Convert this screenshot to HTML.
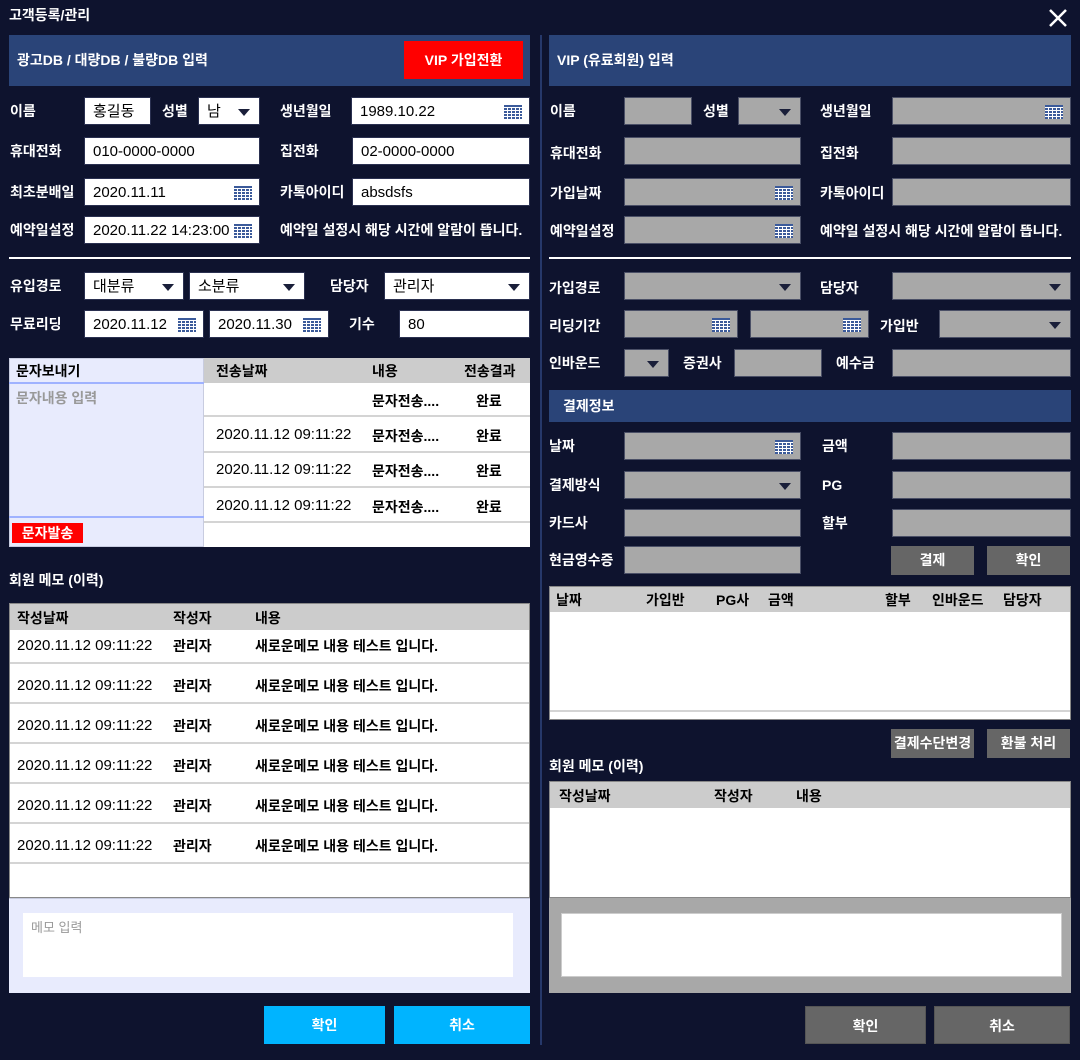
<!DOCTYPE html>
<html><head><meta charset="utf-8"><style>
*{margin:0;padding:0;box-sizing:border-box}
body{width:1080px;height:1060px;background:#0e132e;position:relative;overflow:hidden;font-family:"Liberation Sans","Noto Sans CJK KR",sans-serif;font-size:14px;color:#fff;font-weight:bold}
.a{position:absolute}
.l{position:absolute;line-height:28px;white-space:nowrap}
.i{position:absolute;height:28px;background:#fff;color:#000;line-height:28px;padding-left:8px;font-size:15px;font-weight:normal;border:1px solid #2a3050;white-space:nowrap}
.g{position:absolute;height:28px;background:#a8a8a8;border:1px solid #4a4f66}
.bar{position:absolute;background:#2a4478;line-height:51px;padding-left:8px;font-size:14px}
.cal{position:absolute;right:7px;top:7px;width:18px;height:14px;background:
repeating-linear-gradient(90deg,transparent 0 3px,#fff 3px 4px),repeating-linear-gradient(0deg,#3b5a9a 0 2px,#fff 2px 3px);border-top:2px solid #3b5a9a}
.arr{position:absolute;right:9px;top:11px;width:0;height:0;border-left:6px solid transparent;border-right:6px solid transparent;border-top:7px solid #1a1f3a}
.line{position:absolute;height:2px;background:#fff}
.btn{position:absolute;text-align:center;color:#fff;font-size:14px}
.th{position:absolute;background:#cccccc;color:#000}
.cell{position:absolute;color:#000;white-space:nowrap}
.d{font-weight:normal;font-size:15px;top:auto}
.row{position:absolute;background:#fff;border-bottom:2px solid #d4d4d4}
</style></head><body>
<div class="a" style="left:9px;top:5px;font-size:14px">고객등록/관리</div>
<svg class="a" style="left:1048px;top:8px" width="20" height="20"><path d="M2 2L18 18M18 2L2 18" stroke="#fff" stroke-width="2.5"/></svg>
<div class="a" style="left:540px;top:35px;width:2px;height:1010px;background:#26386a"></div>

<div class="bar" style="left:9px;top:35px;width:521px;height:51px">광고DB / 대량DB / 불량DB 입력</div>
<div class="btn" style="left:404px;top:41px;width:119px;height:38px;line-height:38px;background:#ff0000">VIP 가입전환</div>

<div class="l" style="left:10px;top:97px">이름</div>
<div class="i" style="left:84px;top:97px;width:67px">홍길동</div>
<div class="l" style="left:162px;top:97px">성별</div>
<div class="i" style="left:198px;top:97px;width:62px">남<span class="arr"></span></div>
<div class="l" style="left:280px;top:97px">생년월일</div>
<div class="i" style="left:351px;top:97px;width:179px">1989.10.22<span class="cal"></span></div>

<div class="l" style="left:10px;top:137px">휴대전화</div>
<div class="i" style="left:84px;top:137px;width:176px">010-0000-0000</div>
<div class="l" style="left:280px;top:137px">집전화</div>
<div class="i" style="left:352px;top:137px;width:178px">02-0000-0000</div>

<div class="l" style="left:10px;top:178px">최초분배일</div>
<div class="i" style="left:84px;top:178px;width:176px">2020.11.11<span class="cal"></span></div>
<div class="l" style="left:280px;top:178px">카톡아이디</div>
<div class="i" style="left:352px;top:178px;width:178px">absdsfs</div>

<div class="l" style="left:10px;top:216px">예약일설정</div>
<div class="i" style="left:84px;top:216px;width:176px">2020.11.22 14:23:00<span class="cal"></span></div>
<div class="l" style="left:280px;top:216px">예약일 설정시 해당 시간에 알람이 뜹니다.</div>

<div class="line" style="left:9px;top:257px;width:521px"></div>

<div class="l" style="left:10px;top:272px">유입경로</div>
<div class="i" style="left:84px;top:272px;width:100px">대분류<span class="arr"></span></div>
<div class="i" style="left:189px;top:272px;width:116px">소분류<span class="arr"></span></div>
<div class="l" style="left:330px;top:272px">담당자</div>
<div class="i" style="left:384px;top:272px;width:146px">관리자<span class="arr"></span></div>

<div class="l" style="left:10px;top:310px">무료리딩</div>
<div class="i" style="left:84px;top:310px;width:120px">2020.11.12<span class="cal"></span></div>
<div class="i" style="left:209px;top:310px;width:120px">2020.11.30<span class="cal"></span></div>
<div class="l" style="left:349px;top:310px">기수</div>
<div class="i" style="left:399px;top:310px;width:131px">80</div>

<div class="a" style="left:9px;top:358px;width:195px;height:189px;background:#e8ebfd;border:1px solid #c8cce0"></div>
<div class="cell" style="left:16px;top:360px;line-height:22px">문자보내기</div>
<div class="a" style="left:9px;top:382px;width:195px;height:2px;background:#9fb2ff"></div>
<div class="cell" style="left:16px;top:388px;color:#999;line-height:20px">문자내용 입력</div>
<div class="a" style="left:9px;top:516px;width:195px;height:2px;background:#9fb2ff"></div>
<div class="btn" style="left:12px;top:523px;width:71px;height:20px;line-height:20px;background:#ff0000">문자발송</div>
<div class="a" style="left:204px;top:358px;width:326px;height:189px;background:#fff"></div>
<div class="th" style="left:204px;top:358px;width:326px;height:25px"></div>
<div class="cell" style="left:216px;top:361px">전송날짜</div>
<div class="cell" style="left:372px;top:361px">내용</div>
<div class="cell" style="left:464px;top:361px">전송결과</div>
<div class="row" style="left:204px;top:383px;width:326px;height:34px"></div>
<div class="row" style="left:204px;top:417px;width:326px;height:36px"></div>
<div class="row" style="left:204px;top:453px;width:326px;height:35px"></div>
<div class="row" style="left:204px;top:488px;width:326px;height:35px"></div>
<div class="cell" style="left:372px;top:391px">문자전송....</div><div class="cell" style="left:476px;top:391px">완료</div>
<div class="cell" style="left:216px;top:426px;font-weight:normal;font-size:15px">2020.11.12 09:11:22</div><div class="cell" style="left:372px;top:426px">문자전송....</div><div class="cell" style="left:476px;top:426px">완료</div>
<div class="cell" style="left:216px;top:461px;font-weight:normal;font-size:15px">2020.11.12 09:11:22</div><div class="cell" style="left:372px;top:461px">문자전송....</div><div class="cell" style="left:476px;top:461px">완료</div>
<div class="cell" style="left:216px;top:497px;font-weight:normal;font-size:15px">2020.11.12 09:11:22</div><div class="cell" style="left:372px;top:497px">문자전송....</div><div class="cell" style="left:476px;top:497px">완료</div>

<div class="l" style="left:9px;top:566px">회원 메모 (이력)</div>

<div class="a" style="left:9px;top:603px;width:521px;height:295px;background:#fff;border:1px solid #888"></div>
<div class="th" style="left:10px;top:604px;width:519px;height:26px"></div>
<div class="cell" style="left:17px;top:608px">작성날짜</div>
<div class="cell" style="left:173px;top:608px">작성자</div>
<div class="cell" style="left:255px;top:608px">내용</div>
<div class="row" style="left:10px;top:630px;width:519px;height:34px"></div>
<div class="row" style="left:10px;top:664px;width:519px;height:40px"></div>
<div class="row" style="left:10px;top:704px;width:519px;height:40px"></div>
<div class="row" style="left:10px;top:744px;width:519px;height:40px"></div>
<div class="row" style="left:10px;top:784px;width:519px;height:40px"></div>
<div class="row" style="left:10px;top:824px;width:519px;height:40px"></div>
<div class="cell" style="left:17px;top:637px;font-weight:normal;font-size:15px">2020.11.12 09:11:22</div><div class="cell" style="left:173px;top:636px">관리자</div><div class="cell" style="left:255px;top:636px">새로운메모 내용 테스트 입니다.</div>
<div class="cell" style="left:17px;top:677px;font-weight:normal;font-size:15px">2020.11.12 09:11:22</div><div class="cell" style="left:173px;top:676px">관리자</div><div class="cell" style="left:255px;top:676px">새로운메모 내용 테스트 입니다.</div>
<div class="cell" style="left:17px;top:717px;font-weight:normal;font-size:15px">2020.11.12 09:11:22</div><div class="cell" style="left:173px;top:716px">관리자</div><div class="cell" style="left:255px;top:716px">새로운메모 내용 테스트 입니다.</div>
<div class="cell" style="left:17px;top:757px;font-weight:normal;font-size:15px">2020.11.12 09:11:22</div><div class="cell" style="left:173px;top:756px">관리자</div><div class="cell" style="left:255px;top:756px">새로운메모 내용 테스트 입니다.</div>
<div class="cell" style="left:17px;top:797px;font-weight:normal;font-size:15px">2020.11.12 09:11:22</div><div class="cell" style="left:173px;top:796px">관리자</div><div class="cell" style="left:255px;top:796px">새로운메모 내용 테스트 입니다.</div>
<div class="cell" style="left:17px;top:837px;font-weight:normal;font-size:15px">2020.11.12 09:11:22</div><div class="cell" style="left:173px;top:836px">관리자</div><div class="cell" style="left:255px;top:836px">새로운메모 내용 테스트 입니다.</div>
<div class="a" style="left:9px;top:898px;width:521px;height:95px;background:#e8ebfd;border-top:1px solid #c8cce0"></div>
<div class="a" style="left:23px;top:913px;width:490px;height:64px;background:#fff;color:#999;font-weight:normal;padding:4px 8px;font-size:13px">메모 입력</div>
<div class="btn" style="left:264px;top:1006px;width:121px;height:38px;line-height:38px;background:#00b4ff">확인</div>
<div class="btn" style="left:394px;top:1006px;width:136px;height:38px;line-height:38px;background:#00b4ff">취소</div>

<div class="bar" style="left:549px;top:35px;width:522px;height:51px">VIP (유료회원) 입력</div>

<div class="l" style="left:550px;top:97px">이름</div>
<div class="g" style="left:624px;top:97px;width:68px"></div>
<div class="l" style="left:703px;top:97px">성별</div>
<div class="g" style="left:738px;top:97px;width:63px"><span class="arr"></span></div>
<div class="l" style="left:820px;top:97px">생년월일</div>
<div class="g" style="left:892px;top:97px;width:179px"><span class="cal"></span></div>

<div class="l" style="left:550px;top:139px">휴대전화</div>
<div class="g" style="left:624px;top:137px;width:177px"></div>
<div class="l" style="left:820px;top:139px">집전화</div>
<div class="g" style="left:892px;top:137px;width:179px"></div>

<div class="l" style="left:550px;top:179px">가입날짜</div>
<div class="g" style="left:624px;top:178px;width:177px"><span class="cal"></span></div>
<div class="l" style="left:820px;top:179px">카톡아이디</div>
<div class="g" style="left:892px;top:178px;width:179px"></div>

<div class="l" style="left:550px;top:217px">예약일설정</div>
<div class="g" style="left:624px;top:216px;width:177px"><span class="cal"></span></div>
<div class="l" style="left:820px;top:217px">예약일 설정시 해당 시간에 알람이 뜹니다.</div>

<div class="line" style="left:549px;top:257px;width:522px"></div>

<div class="l" style="left:549px;top:274px">가입경로</div>
<div class="g" style="left:624px;top:272px;width:177px"><span class="arr"></span></div>
<div class="l" style="left:820px;top:274px">담당자</div>
<div class="g" style="left:892px;top:272px;width:179px"><span class="arr"></span></div>

<div class="l" style="left:549px;top:312px">리딩기간</div>
<div class="g" style="left:624px;top:310px;width:114px"><span class="cal"></span></div>
<div class="g" style="left:750px;top:310px;width:119px"><span class="cal"></span></div>
<div class="l" style="left:880px;top:312px">가입반</div>
<div class="g" style="left:939px;top:310px;width:132px"><span class="arr"></span></div>

<div class="l" style="left:549px;top:349px">인바운드</div>
<div class="g" style="left:624px;top:349px;width:45px"><span class="arr"></span></div>
<div class="l" style="left:683px;top:349px">증권사</div>
<div class="g" style="left:734px;top:349px;width:88px"></div>
<div class="l" style="left:836px;top:349px">예수금</div>
<div class="g" style="left:892px;top:349px;width:179px"></div>

<div class="bar" style="left:549px;top:390px;width:522px;height:32px;line-height:32px;padding-left:14px">결제정보</div>

<div class="l" style="left:549px;top:432px">날짜</div>
<div class="g" style="left:624px;top:432px;width:177px"><span class="cal"></span></div>
<div class="l" style="left:822px;top:432px">금액</div>
<div class="g" style="left:892px;top:432px;width:179px"></div>

<div class="l" style="left:549px;top:471px">결제방식</div>
<div class="g" style="left:624px;top:471px;width:177px"><span class="arr"></span></div>
<div class="l" style="left:822px;top:471px">PG</div>
<div class="g" style="left:892px;top:471px;width:179px"></div>

<div class="l" style="left:549px;top:509px">카드사</div>
<div class="g" style="left:624px;top:509px;width:177px"></div>
<div class="l" style="left:822px;top:509px">할부</div>
<div class="g" style="left:892px;top:509px;width:179px"></div>

<div class="l" style="left:549px;top:546px">현금영수증</div>
<div class="g" style="left:624px;top:546px;width:177px"></div>
<div class="btn" style="left:891px;top:546px;width:83px;height:29px;line-height:29px;background:#666">결제</div>
<div class="btn" style="left:987px;top:546px;width:83px;height:29px;line-height:29px;background:#666">확인</div>

<div class="a" style="left:549px;top:586px;width:522px;height:134px;background:#fff;border:1px solid #888"></div>
<div class="th" style="left:550px;top:587px;width:520px;height:25px"></div>
<div class="cell" style="left:556px;top:590px">날짜</div>
<div class="cell" style="left:646px;top:590px">가입반</div>
<div class="cell" style="left:716px;top:590px">PG사</div>
<div class="cell" style="left:768px;top:590px">금액</div>
<div class="cell" style="left:885px;top:590px">할부</div>
<div class="cell" style="left:932px;top:590px">인바운드</div>
<div class="cell" style="left:1003px;top:590px">담당자</div>
<div class="a" style="left:550px;top:710px;width:520px;height:2px;background:#d4d4d4"></div>

<div class="btn" style="left:891px;top:729px;width:83px;height:29px;line-height:29px;background:#666">결제수단변경</div>
<div class="btn" style="left:987px;top:729px;width:83px;height:29px;line-height:29px;background:#666">환불 처리</div>

<div class="l" style="left:549px;top:752px">회원 메모 (이력)</div>
<div class="a" style="left:549px;top:781px;width:522px;height:117px;background:#fff;border:1px solid #888"></div>
<div class="th" style="left:550px;top:782px;width:520px;height:26px"></div>
<div class="cell" style="left:559px;top:786px">작성날짜</div>
<div class="cell" style="left:714px;top:786px">작성자</div>
<div class="cell" style="left:796px;top:786px">내용</div>
<div class="a" style="left:549px;top:898px;width:522px;height:95px;background:#a8a8a8"></div>
<div class="a" style="left:561px;top:913px;width:501px;height:64px;background:#fff;border:1px solid #ccc"></div>
<div class="btn" style="left:805px;top:1006px;width:121px;height:38px;line-height:38px;background:#666;border:1px solid #555">확인</div>
<div class="btn" style="left:934px;top:1006px;width:136px;height:38px;line-height:38px;background:#666;border:1px solid #555">취소</div>
</body></html>
